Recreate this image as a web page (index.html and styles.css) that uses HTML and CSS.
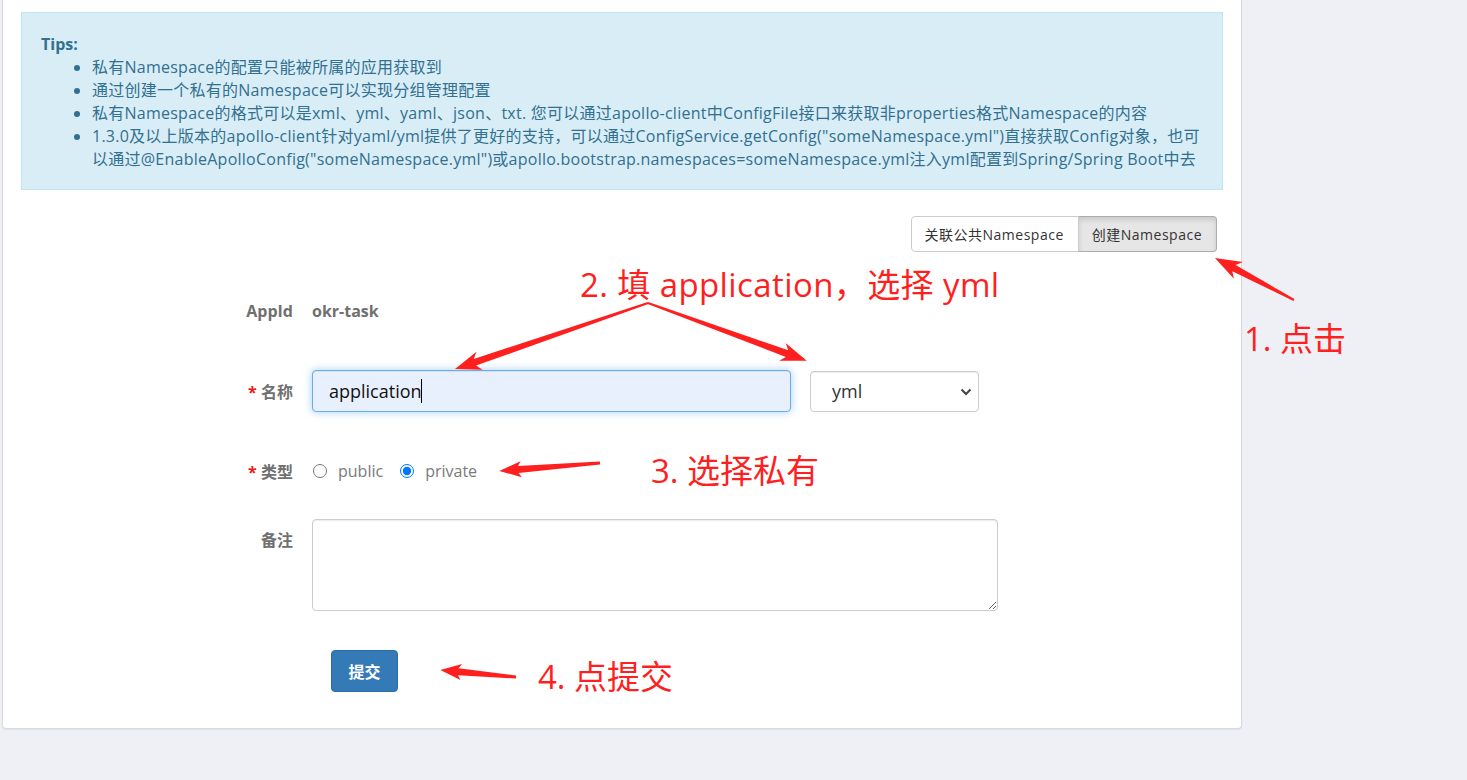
FILE: index.html
```html
<!DOCTYPE html>
<html lang="zh-CN">
<head>
<meta charset="utf-8">
<title>创建Namespace</title>
<link rel="stylesheet" href="styles.css">
</head>
<body>
<div class="panel">
  <div class="tips">
    <div class="tips-title">Tips:</div>
    <ul class="tips-list">
      <li>私有Namespace的配置只能被所属的应用获取到</li>
      <li>通过创建一个私有的Namespace可以实现分组管理配置</li>
      <li>私有Namespace的格式可以是xml、yml、yaml、json、txt. 您可以通过apollo-client中ConfigFile接口来获取非properties格式Namespace的内容</li>
      <li>1.3.0及以上版本的apollo-client针对yaml/yml提供了更好的支持，可以通过ConfigService.getConfig("someNamespace.yml")直接获取Config对象，也可以通过@EnableApolloConfig("someNamespace.yml")或apollo.bootstrap.namespaces=someNamespace.yml注入yml配置到Spring/Spring Boot中去</li>
    </ul>
  </div>

  <div class="btn-row">
    <div class="btn-group">
      <button class="btn">关联公共Namespace</button>
      <button class="btn active">创建Namespace</button>
    </div>
  </div>

  <form class="form">
    <div class="row row-appid">
      <label class="label">AppId</label>
      <div class="control value">okr-task</div>
    </div>
    <div class="row row-name">
      <label class="label"><span class="star">*</span> 名称</label>
      <div class="control name-wrap">
        <input class="input name-input" type="text" value="application">
        <span class="caret"></span>
      </div>
      <div class="select-wrap">
        <select class="select">
          <option>yml</option>
        </select>
        <svg class="chev" width="12" height="8" viewBox="0 0 12 8"><path d="M1.5 1.5 L6 6 L10.5 1.5" fill="none" stroke="#444" stroke-width="2"/></svg>
      </div>
    </div>
    <div class="row row-type">
      <label class="label"><span class="star">*</span> 类型</label>
      <div class="control radios">
        <input type="radio" name="type" class="radio">
        <span class="radio-text">public</span>
        <input type="radio" name="type" class="radio" checked>
        <span class="radio-text">private</span>
      </div>
    </div>
    <div class="row row-note">
      <label class="label label-top">备注</label>
      <div class="control">
        <textarea class="textarea"></textarea>
      </div>
    </div>
    <div class="row row-submit">
      <button type="button" class="submit">提交</button>
    </div>
  </form>
</div>

<div class="marks">
  <svg class="arrows" width="1467" height="780" viewBox="0 0 1467 780">
    <g fill="#fe1f1f">
      <g transform="translate(1294 300) rotate(208)"><polygon points="0,-1 68,-3.5 63,-9.5 89.5,0 63,9.5 68,3.5 0,1"/></g>
      <g transform="translate(648 303) rotate(161.1)"><polygon points="0,-1 183,-3.5 178,-9.5 204,0 178,9.5 183,3.5 0,1"/></g>
      <g transform="translate(648 303) rotate(20)"><polygon points="0,-1 148,-3.5 143,-9.5 169,0 143,9.5 148,3.5 0,1"/></g>
      <g transform="translate(600 463) rotate(175.5)"><polygon points="0,-1.5 82,-3.5 79,-8 101,0 79,8 82,3.5 0,1.5"/></g>
      <g transform="translate(516 677) rotate(185.3)"><polygon points="0,-1.5 58,-3.5 55,-8 76,0 55,8 58,3.5 0,1.5"/></g>
    </g>
  </svg>
  <div class="note note-1">1. 点击</div>
  <div class="note note-2">2. 填 application，选择 yml</div>
  <div class="note note-3">3. 选择私有</div>
  <div class="note note-4">4. 点提交</div>
</div>
</body>
</html>
```

FILE: styles.css
```css
html, body {
  margin: 0;
  padding: 0;
}
body {
  width: 1467px;
  height: 780px;
  overflow: hidden;
  background: #eff0f5;
  font-family: "Open Sans", "Noto Sans CJK SC", sans-serif;
  font-size: 16px;
  position: relative;
}

.panel {
  margin-left: 2px;
  width: 1240px;
  box-sizing: border-box;
  background: #fff;
  border: 1px solid #d9d9d9;
  border-top: none;
  border-radius: 0 0 4px 4px;
  box-shadow: 0 1px 2px rgba(0, 0, 0, 0.06);
  padding: 12px 18px 36px 18px;
}

.tips {
  background: #d9edf7;
  border: 1px solid #bce8f1;
  color: #31708f;
  padding: 20px 19px 18px 19px;
  line-height: 23px;
  font-size: 16px;
  letter-spacing: 0.25px;
}
.tips-title {
  font-weight: 700;
  letter-spacing: 0;
}
.tips-list {
  margin: 0;
  padding-left: 51px;
}

.btn-row {
  margin-top: 26px;
  display: flex;
  justify-content: flex-end;
  padding-right: 6px;
}
.btn-group {
  display: flex;
}
.btn {
  height: 36px;
  font-family: "Open Sans", "Noto Sans CJK SC", sans-serif;
  font-size: 14px;
  letter-spacing: 0.5px;
  color: #333;
  background: #fff;
  border: 1px solid #ccc;
  padding: 0 14px 0 13px;
  margin: 0;
  border-radius: 4px 0 0 4px;
}
.btn.active {
  background: #e6e6e6;
  border-color: #adadad;
  border-left-color: #ccc;
  border-radius: 0 4px 4px 0;
  margin-left: -1px;
  box-shadow: inset 0 3px 5px rgba(0, 0, 0, 0.125);
}

.form {
  display: block;
}
.row {
  display: flex;
  align-items: center;
}
.label {
  flex: none;
  width: 272px;
  text-align: right;
  font-weight: 700;
  color: #707070;
  font-size: 16px;
}
.star {
  color: #f01818;
}
.control {
  margin-left: 19px;
}
.row-appid {
  margin-top: 42px;
  height: 34px;
}
.value {
  font-weight: 700;
  color: #707070;
}
.row-name {
  margin-top: 42px;
  height: 42px;
}
.name-wrap {
  position: relative;
}
.input {
  display: block;
  box-sizing: border-box;
  width: 479px;
  height: 42px;
  padding: 0 16px;
  font-family: "Open Sans", "Noto Sans CJK SC", sans-serif;
  font-size: 18px;
  color: #111;
  background: #e8f0fe;
  border: 1px solid #66afe9;
  border-radius: 4px;
  outline: none;
  box-shadow: inset 0 1px 1px rgba(0, 0, 0, 0.075), 0 0 8px rgba(102, 175, 233, 0.6);
}
.caret {
  position: absolute;
  left: 109px;
  top: 9px;
  width: 1px;
  height: 24px;
  background: #000;
}
.select-wrap {
  position: relative;
  margin-left: 19px;
}
.select {
  display: block;
  appearance: none;
  -webkit-appearance: none;
  box-sizing: border-box;
  width: 169px;
  height: 41px;
  padding: 0 21px;
  font-family: "Open Sans", "Noto Sans CJK SC", sans-serif;
  font-size: 18px;
  color: #333;
  background: #fff;
  border: 1px solid #ccc;
  border-radius: 4px;
  box-shadow: inset 0 1px 1px rgba(0, 0, 0, 0.075);
}
.chev {
  position: absolute;
  right: 7px;
  top: 17px;
}

.row-type {
  margin-top: 42px;
  height: 34px;
}
.radios {
  display: flex;
  align-items: center;
  color: #7a7a7a;
}
.radio {
  width: 14px;
  height: 14px;
  margin: 0 11px 0 1px;
}
.radio-text {
  margin-right: 16px;
}

.row-note {
  margin-top: 31px;
  align-items: flex-start;
}
.label-top {
  padding-top: 10px;
  line-height: 22px;
}
.textarea {
  display: block;
  box-sizing: border-box;
  width: 686px;
  height: 92px;
  border: 1px solid #ccc;
  border-radius: 4px;
  box-shadow: inset 0 1px 1px rgba(0, 0, 0, 0.075);
  resize: both;
}

.row-submit {
  margin-top: 39px;
  padding-left: 310px;
}
.submit {
  height: 42px;
  width: 67px;
  background: #337ab7;
  border: 1px solid #2e6da4;
  border-radius: 4px;
  color: #fff;
  font-family: "Open Sans", "Noto Sans CJK SC", sans-serif;
  font-size: 16px;
  font-weight: 700;
  padding: 0;
}

.marks {
  position: absolute;
  left: 0;
  top: 0;
  width: 1467px;
  height: 780px;
  pointer-events: none;
}
.arrows {
  position: absolute;
  left: 0;
  top: 0;
}
.note {
  position: absolute;
  font-family: "Open Sans", "Noto Sans CJK SC", sans-serif;
  font-size: 33px;
  line-height: 40px;
  color: #fe1f1f;
  white-space: nowrap;
}
.note-1 { left: 1244px; top: 319px; }
.note-2 { left: 580px; top: 265px; letter-spacing: 0.4px; }
.note-3 { left: 651px; top: 451px; }
.note-4 { left: 538px; top: 657px; }
```
